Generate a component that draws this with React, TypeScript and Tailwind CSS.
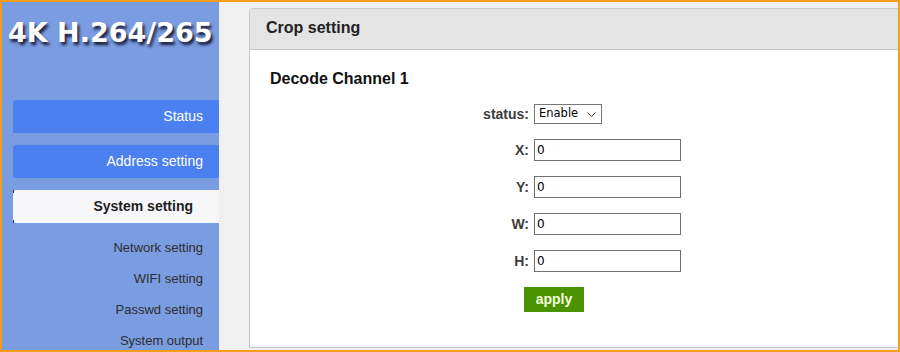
import React from "react";

const sans = { fontFamily: '"Liberation Sans", Arial, sans-serif' };

function Row({ label, children }: { label: string; children: React.ReactNode }) {
  return (
    <div className="flex items-center ml-[184px]">
      <div className="w-[100px] text-right text-[14px] font-bold text-[#3c3c3c] leading-[16px] pr-[5px]">{label}</div>
      {children}
    </div>
  );
}

function Field() {
  return (
    <div
      className="w-[147px] h-[22px] border border-[#707070] bg-white flex items-center pl-[2px] text-[12px] text-black"
      style={{ fontFamily: '"DejaVu Sans", Tahoma, sans-serif' }}
    >
      0
    </div>
  );
}

export default function App() {
  return (
    <div className="w-[900px] h-[352px] border-2 border-[#f49d1c] flex overflow-hidden" style={sans}>
      {/* Sidebar */}
      <div className="w-[217px] shrink-0 bg-[#7a9ce1] flex flex-col overflow-hidden">
        <div
          className="shrink-0 pt-[15px] pl-[6px] h-[98px] text-[27px] leading-[32px] font-bold text-white whitespace-nowrap"
          style={{ fontFamily: '"DejaVu Sans", Verdana, sans-serif', textShadow: "2px 3px 3px #1b1b3a" }}
        >
          4K H.264/265
        </div>
        <div className="shrink-0 flex flex-col gap-[12px] pl-[11px]">
          <div className="h-[33px] bg-[#4a80f0] rounded-tl-[3px] text-white text-[14px] flex items-center justify-end pr-[16px]">
            Status
          </div>
          <div className="h-[33px] bg-[#4a80f0] rounded-tl-[3px] text-white text-[14px] flex items-center justify-end pr-[16px]">
            Address setting
          </div>
          <div className="relative h-[33px] bg-[#f7f7f9] rounded-l-[3px] text-[#1e1e1e] font-bold text-[14px] flex items-center justify-end pr-[26px]">
            <span className="absolute left-0 top-0 w-[1px] h-[3px] bg-[#333]" />
            <span className="absolute left-0 bottom-0 w-[1px] h-[3px] bg-[#333]" />
            System setting
          </div>
        </div>
        <div className="shrink-0 mt-[9px] flex flex-col text-[13px] text-[#2e2e2e]">
          {["Network setting", "WIFI setting", "Passwd setting", "System output"].map((t) => (
            <div key={t} className="shrink-0 h-[31px] leading-[31px] text-right pr-[16px]">
              {t}
            </div>
          ))}
        </div>
      </div>

      {/* Content */}
      <div className="flex-1 bg-[#f0f0f0] pt-[6px] pl-[30px] overflow-hidden">
        <div className="w-[670px] h-[340px] bg-white border border-[#c8c8c8] rounded-tl-[4px] overflow-hidden">
          <div className="h-[41px] bg-[#e4e4e4] border-b border-[#c8c8c8] pl-[16px] text-[16px] font-bold text-[#222] leading-[38px]">
            Crop setting
          </div>
          <div className="pt-[20px] pl-[20px] text-[16px] font-bold text-[#111] leading-[18px]">Decode Channel 1</div>
          <div className="mt-[16px] flex flex-col gap-[15px]">
            <Row label="status:">
              <div
                className="relative w-[68px] h-[20px] border border-[#767676] bg-white flex items-center pl-[4px] text-[11.5px] text-black"
                style={{ fontFamily: '"DejaVu Sans", Tahoma, sans-serif' }}
              >
                Enable
                <svg className="absolute right-[5px] top-[7px]" width="9" height="5" viewBox="0 0 9 5">
                  <path d="M0.5 0.5 L4.5 4.5 L8.5 0.5" fill="none" stroke="#333" strokeWidth="1" />
                </svg>
              </div>
            </Row>
            <Row label="X:"><Field /></Row>
            <Row label="Y:"><Field /></Row>
            <Row label="W:"><Field /></Row>
            <Row label="H:"><Field /></Row>
            <div className="ml-[274px]">
              <div className="w-[60px] h-[25px] bg-[#4b9200] text-[#f4ffdc] text-[14px] font-bold flex items-center justify-center">
                apply
              </div>
            </div>
          </div>
        </div>
      </div>
    </div>
  );
}
